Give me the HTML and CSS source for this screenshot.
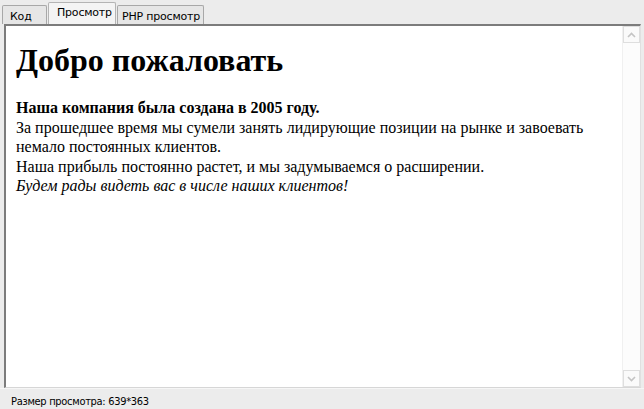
FILE: index.html
```html
<!DOCTYPE html>
<html lang="ru">
<head>
<meta charset="utf-8">
<title>Просмотр</title>
<link rel="stylesheet" href="styles.css">
</head>
<body>
<div class="window">
  <div class="tabs">
    <div class="tab tab-code">Код</div>
    <div class="tab tab-view active">Просмотр</div>
    <div class="tab tab-php">PHP просмотр</div>
  </div>
  <div class="panel">
    <div class="view">
      <h1 class="title">Добро пожаловать</h1>
      <p class="text"><b>Наша компания была создана в 2005 году.</b><br>
      За прошедшее время мы сумели занять лидирующие позиции на рынке и завоевать немало постоянных клиентов.<br>
      Наша прибыль постоянно растет, и мы задумываемся о расширении.<br>
      <i>Будем рады видеть вас в числе наших клиентов!</i></p>
    </div>
    <div class="scrollbar">
      <div class="sbtn">
        <svg width="9" height="6" viewBox="0 0 9 6"><path d="M1 5 L4.5 1.5 L8 5" fill="none" stroke="#c4c4c4" stroke-width="1.6"/></svg>
      </div>
      <div class="track"></div>
      <div class="sbtn">
        <svg width="9" height="6" viewBox="0 0 9 6"><path d="M1 1 L4.5 4.5 L8 1" fill="none" stroke="#c4c4c4" stroke-width="1.6"/></svg>
      </div>
    </div>
  </div>
  <div class="status">Размер просмотра: 639*363</div>
</div>
</body>
</html>
```
FILE: styles.css
```css
html, body {
  margin: 0;
  padding: 0;
  background: #ececec;
}
.window {
  width: 644px;
  height: 409px;
  display: flex;
  flex-direction: column;
  font-family: "DejaVu Sans", "Liberation Sans", sans-serif;
  font-size: 11px;
  color: #000;
}
.tabs {
  height: 24px;
  display: flex;
  align-items: flex-end;
  padding-left: 2px;
  box-sizing: border-box;
}
.tab {
  height: 19px;
  box-sizing: border-box;
  border: 1px solid #a8a8a8;
  border-bottom: none;
  background: #e6e6e6;
  padding: 3px 0 0 0;
  border-radius: 2px 2px 0 0;
  line-height: 15px;
  letter-spacing: -0.2px;
  white-space: nowrap;
}
.tab-code {
  width: 45px;
  padding-left: 7px;
}
.tab-view {
  width: 68px;
  margin-left: 1px;
  padding-left: 8px;
}
.tab-php {
  width: 87px;
  margin-left: 1px;
  padding-left: 4px;
}
.tab.active {
  height: 22px;
  background: #f4f4f4;
  border-color: #b4b4b4;
  padding-top: 3px;
  line-height: 14px;
}
.panel {
  height: 364px;
  margin: 0 3px 0 4px;
  box-sizing: border-box;
  border-top: 2px solid #7c7c7c;
  border-left: 2px solid #7c7c7c;
  border-right: 1px solid #e0e0e0;
  border-bottom: 1px solid #d6d6d6;
  background: #fff;
  display: flex;
}
.view {
  flex: 1;
  padding: 1px 8px 0 10px;
  font-family: "Liberation Serif", "Times New Roman", serif;
  font-size: 16px;
}
.title {
  font-size: 32px;
  font-weight: bold;
  margin: 15px 0 19px 0;
  line-height: 37px;
}
.text {
  margin: 0;
  line-height: 19.6px;
}
.scrollbar {
  width: 17px;
  display: flex;
  flex-direction: column;
  background: #fcfcfc;
  border-left: 1px solid #f0f0f0;
}
.sbtn {
  height: 17px;
  box-sizing: border-box;
  border: 1px solid #dedede;
  display: flex;
  align-items: center;
  justify-content: center;
  background: #fafafa;
}
.track {
  flex: 1;
}
.status {
  flex: 1;
  padding: 6px 0 0 11px;
  box-sizing: border-box;
  border-top: 1px solid #f6f6f6;
  font-family: "DejaVu Sans Condensed", "Liberation Sans", sans-serif;
  letter-spacing: -0.3px;
}
```
